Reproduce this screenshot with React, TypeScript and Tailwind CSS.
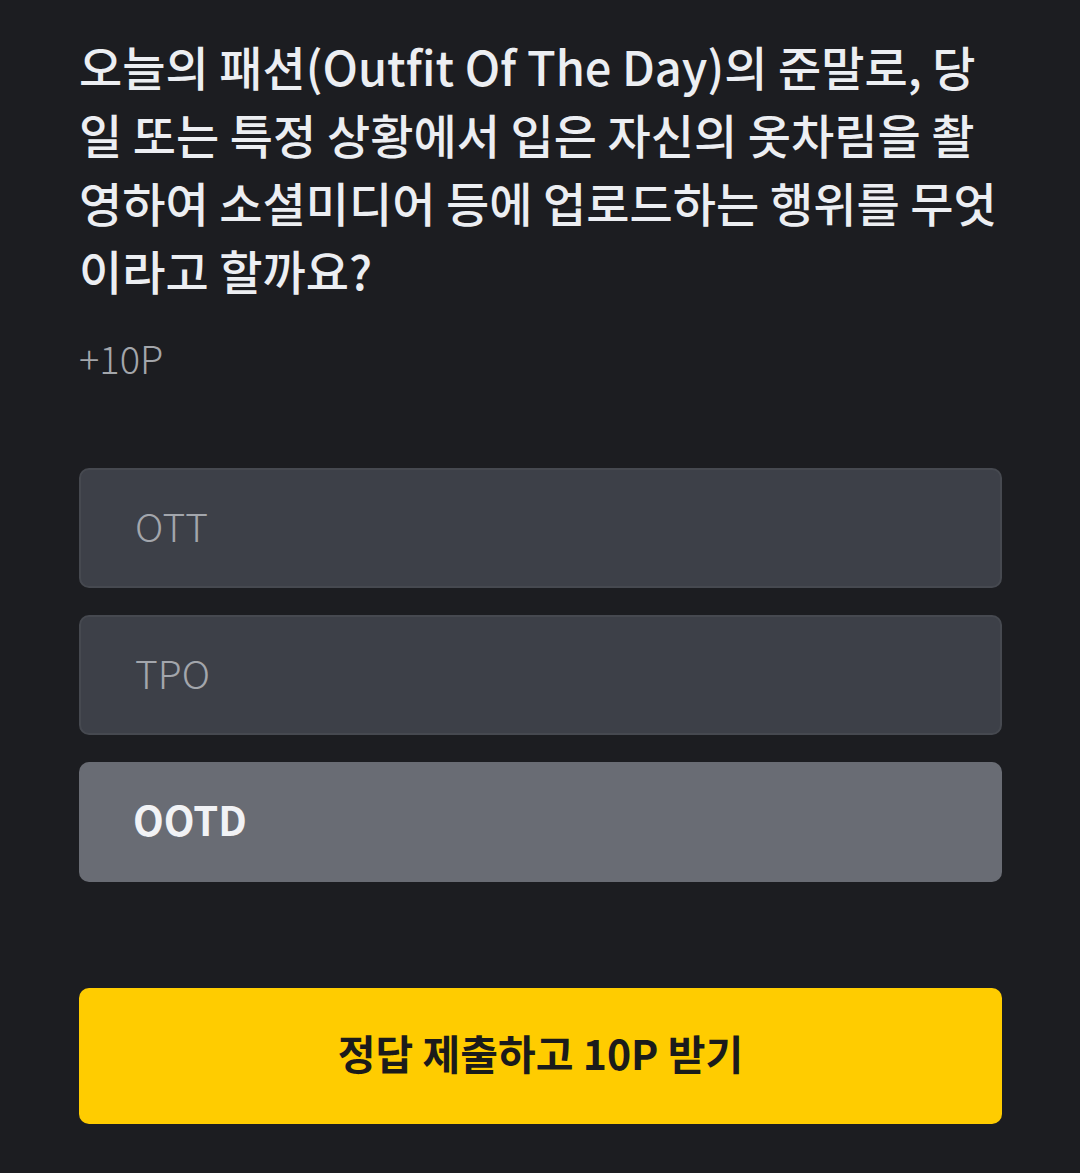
const options = [
  { id: 'ott', label: 'OTT' },
  { id: 'tpo', label: 'TPO' },
  { id: 'ootd', label: 'OOTD' },
];

export default function App() {
  const selected = 'ootd';

  return (
    <div
      className="min-h-[1173px] bg-[#1c1d21] pl-[79px] pr-[78px] pt-[32px]"
      style={{ fontFamily: '"Noto Sans CJK KR", "Noto Sans", sans-serif' }}
    >
      <h1 className="break-all text-[47px] font-medium leading-[68px] text-[#eceef2]">
        오늘의 패션(Outfit Of The Day)의 준말로, 당일 또는 특정 상황에서 입은 자신의 옷차림을 촬영하여 소셜미디어 등에 업로드하는 행위를 무엇이라고 할까요?
      </h1>
      <p className="mt-[30px] text-[38px] font-light leading-[48px] text-[#a3a6ab]">+10P</p>

      <div className="mt-[86px] flex flex-col gap-[27px]">
        {options.map((opt) => {
          const active = opt.id === selected;
          return (
            <button
              key={opt.id}
              className={`flex h-[120px] items-center rounded-[10px] px-[54px] pb-[6px] text-left ${
                active
                  ? 'bg-[#696c74] text-[40px] font-bold text-[#f1f2f5]'
                  : 'border-2 border-[#464950] bg-[#3d4048] text-[39px] font-light text-[#a3a6ac]'
              }`}
            >
              {opt.label}
            </button>
          );
        })}
      </div>

      <button className="mt-[106px] flex h-[136px] w-full items-center justify-center rounded-[10px] bg-[#ffcc00] pb-[6px] text-[41px] font-bold text-[#1b1b1b]">
        정답 제출하고 10P 받기
      </button>
    </div>
  );
}
